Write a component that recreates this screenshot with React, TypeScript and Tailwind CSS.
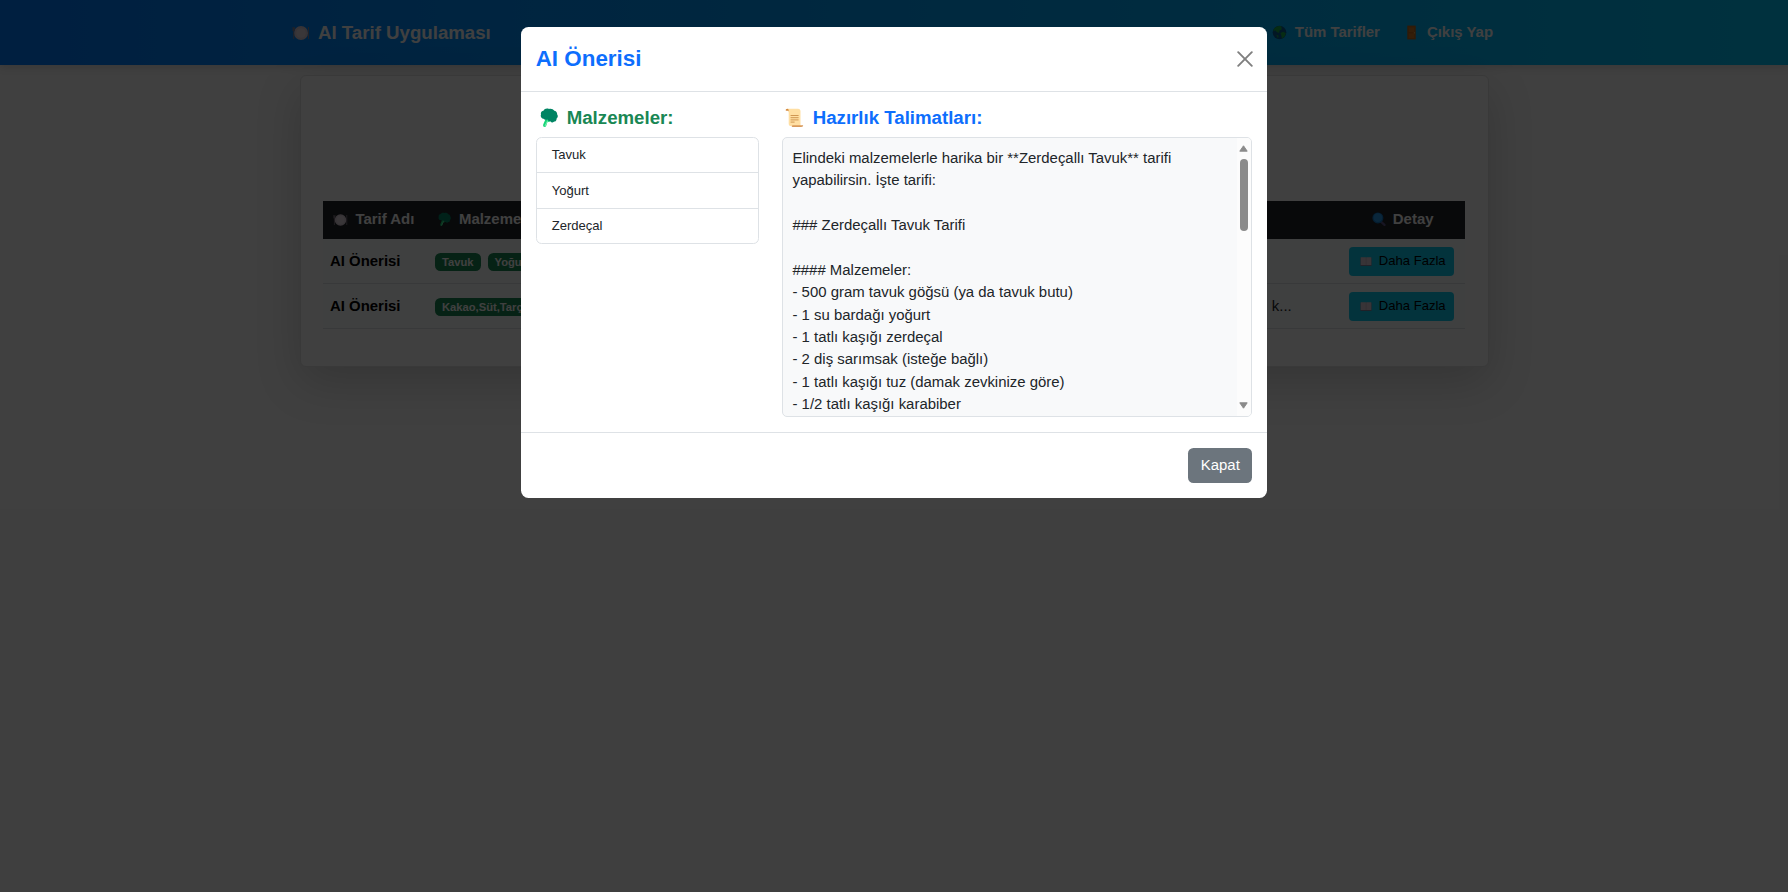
import type { ReactNode } from "react";

const PlateIcon = ({ className }: { className: string }) => (
  <svg viewBox="0 0 18 16" className={className}>
    <circle cx="9" cy="8" r="7" fill="#d9ccd6" />
    <circle cx="9" cy="8" r="4.800" fill="#e6dbe4" />
    <path d="M1 2v4M2.4 2v4M1.7 3v11M16.500 2v12" stroke="#8f8290" strokeWidth=".9" fill="none" />
  </svg>
);

const BroccoliIcon = ({ className }: { className: string }) => (
  <svg viewBox="0 0 18 20" className={className}>
    <path d="M6 10 3.200 16.500q-.8 2 1.300 2.500 1.600.2 2-2l.8-2.800L11.500 13l-1-4z" fill="#16d577" />
    <path d="M7.800 12.500 4.900 18.200" stroke="#8df2bb" strokeWidth=".9" />
    <path d="M9 .9C6.800-.1 4.200.8 3.700 2.500 1.700 2.900.4 4.600 1 6.500c-.9 2 .5 4.100 2.500 4.300 1 1.200 2.700 1.300 4 .4.5 1.700 1.900 2.300 3 2 .8 1.500 2.800 1.600 3.800.4 1.600-.1 2.500-1.500 2.200-2.900 1.500-1.200 1.700-3.200.6-4.500.2-2-1.200-3.300-2.800-3.500C13.300 1 11 .2 9 .9z" fill="#008463" />
  </svg>
);

const ScrollIcon = ({ className }: { className: string }) => (
  <svg viewBox="0 0 19 20" className={className}>
    <path d="M2 .8h11q2.500 0 2.500 2.500V18H5.500q-1.800 0-1.800-2V4.500z" fill="#ffdfa3" />
    <path d="M.6 2.300Q.6.700 2.200.700 3.800.700 3.800 2.800H1.300z" fill="#d3883e" />
    <path d="M5.600 7.500h8M5.600 9.700h8M5.600 11.900h8M5.600 14.100h4" stroke="#cb8f4a" strokeWidth=".9" />
    <path d="M7.500 17.200h10.700q.2 1.800-2 1.800H7.500q-1.600-.2 0-1.800z" fill="#d99a5b" />
  </svg>
);

const GlobeIcon = ({ className }: { className: string }) => (
  <svg viewBox="0 0 16 16" className={className}>
    <circle cx="8" cy="8" r="7.300" fill="#0b5c94" />
    <path d="M2.500 3.500Q6 .300 9.800 1.200L10.500 4.500 8 5.800 7.500 8.500 5 7.500 3.500 5.500 1.200 7zM9 8.500l3-1.200 2.800 1.500-1.500 3.800-2.700 1.800-.5-3zM4.500 10.500l2.500 1-.6 2.500z" fill="#1bb14c" />
  </svg>
);

const DoorIcon = ({ className }: { className: string }) => (
  <svg viewBox="0 0 10 16" className={className}>
    <path d="M.3.300h9.400v15.400H.3z" fill="#c06a1c" />
    <path d="M2 2.500h6v5H2zM2 9h6v5H2z" fill="#cf7a24" />
    <circle cx="8.200" cy="8.300" r=".7" fill="#ffd060" />
  </svg>
);

const SearchIcon = ({ className }: { className: string }) => (
  <svg viewBox="0 0 15 16" className={className}>
    <path d="m9.800 10.500 3.600 3.300" stroke="#5b5488" strokeWidth="2.400" strokeLinecap="round" />
    <circle cx="6.300" cy="6.300" r="5.900" fill="#1378c4" />
    <circle cx="6.300" cy="6" r="4.600" fill="#2b9cec" />
  </svg>
);

const BookIcon = ({ className }: { className: string }) => (
  <svg viewBox="0 0 13 11" className={className}>
    <path d="M.5 1.500h12v8.800H.5z" fill="#8d8098" />
    <path d="M.8.800h5.600v8.600H.8zM6.700.800h5.500v8.600H6.700z" fill="#ddd0da" />
  </svg>
);

const Badge = ({ children }: { children: ReactNode }) => (
  <span className="flex h-[18.500px] items-center rounded-[5.500px] bg-[#198754] px-[7px] text-[11.200px] font-bold text-white">
    {children}
  </span>
);

const rows = [
  { name: "AI Önerisi", badges: ["Tavuk", "Yoğurt", "Zerdeçal"], note: "" },
  { name: "AI Önerisi", badges: ["Kakao,Süt,Tarçın"], note: "k..." },
];

const ingredients = ["Tavuk", "Yoğurt", "Zerdeçal"];

const instructions = `Elindeki malzemelerle harika bir **Zerdeçallı Tavuk** tarifi yapabilirsin. İşte tarifi:

### Zerdeçallı Tavuk Tarifi

#### Malzemeler:
- 500 gram tavuk göğsü (ya da tavuk butu)
- 1 su bardağı yoğurt
- 1 tatlı kaşığı zerdeçal
- 2 diş sarımsak (isteğe bağlı)
- 1 tatlı kaşığı tuz (damak zevkinize göre)
- 1/2 tatlı kaşığı karabiber`;

function Navbar() {
  return (
    <nav className="flex h-[65px] items-center justify-between bg-linear-to-r from-[#007bff] to-[#00c3f5] pl-[292px] pr-[295px] font-bold text-white shadow-[0_2px_8px_rgba(0,0,0,0.15)]">
      <div className="flex items-center text-[18.670px]">
        <PlateIcon className="mr-2 h-4 w-[18px]" />
        AI Tarif Uygulaması
      </div>
      <div className="flex items-center text-[14.930px]">
        <GlobeIcon className="mr-2 size-[15px]" />
        Tüm Tarifler
        <DoorIcon className="ml-[27.500px] mr-[10.500px] h-[15px] w-[9px]" />
        Çıkış Yap
      </div>
    </nav>
  );
}

function RecipeCard() {
  return (
    <main className="mx-[299.500px] mt-[10px] h-[292px] rounded-md border border-[#e3e3e3] bg-white px-[22.500px] pt-[125px] shadow-[0_15px_45px_rgba(0,0,0,0.175)]">
      <div className="flex h-[38px] items-center bg-[#212529] pb-px font-bold text-white">
        <div className="flex w-[112px] items-center pl-[10px]">
          <PlateIcon className="mr-[7.500px] h-[14px] w-[15px]" />
          Tarif Adı
        </div>
        <div className="flex flex-1 items-center pl-[3px]">
          <BroccoliIcon className="mr-[8px] h-[15px] w-[13px]" />
          Malzemeler
        </div>
        <div className="mr-[31.500px] flex items-center">
          <SearchIcon className="mr-[7px] h-[15px] w-[14px]" />
          Detay
        </div>
      </div>
      {rows.map((row, i) => (
        <div key={i} className="flex h-[45px] items-center border-b border-[#dee2e6] bg-[#fbfdfd]">
          <div className="w-[112px] pl-[7px] font-bold text-black">{row.name}</div>
          <div className="flex flex-1 gap-[7px] pt-[2px]">
            {row.badges.map((b) => (
              <Badge key={b}>{b}</Badge>
            ))}
          </div>
          <div className="w-[77px]">{row.note}</div>
          <div className="mr-[11.200px] flex h-[29px] w-[105px] items-center rounded bg-[#0dcaf0] pl-[11px] text-[13.070px] text-black">
            <BookIcon className="mr-[7px] h-[11px] w-[12px]" />
            Daha Fazla
          </div>
        </div>
      ))}
    </main>
  );
}

function InstructionsBox() {
  return (
    <div className="flex h-[280px] w-[470.500px] overflow-hidden rounded-[5px] border border-[#dee2e6] bg-[#f8f9fa]">
      <p className="flex-1 whitespace-pre-wrap pl-[9.800px] pr-[9px] pt-[9.300px] leading-[22.400px]">{instructions}</p>
      <div className="flex w-[14.500px] flex-col items-center justify-between bg-[#fcfcfc] pb-[7px] pt-[7px]">
        <div className="flex flex-col items-center gap-[7px]">
          <svg viewBox="0 0 9 7" className="h-[7px] w-[9px]">
            <path d="M4.500.800 8.200 6.200H.8z" fill="#8b8b8b" stroke="#8b8b8b" strokeLinejoin="round" />
          </svg>
          <div className="h-[72px] w-2 rounded-full bg-[#8b8b8b]" />
        </div>
        <svg viewBox="0 0 9 7" className="h-[7px] w-[9px]">
          <path d="M4.500 6.200 8.200.800H.8z" fill="#8b8b8b" stroke="#8b8b8b" strokeLinejoin="round" />
        </svg>
      </div>
    </div>
  );
}

function RecipeDialog() {
  return (
    <div role="dialog" className="h-[471px] w-[746.600px] rounded-[7.500px] bg-white text-[#212529]">
      <header className="flex h-[64.500px] items-center justify-between border-b border-[#dee2e6] pl-[15px] pr-[14.500px]">
        <h2 className="text-[22.400px] font-bold text-[#0d6efd]">AI Önerisi</h2>
        <svg viewBox="0 0 16 16" className="size-4">
          <path d="m1.200 1.200 13.600 13.600M14.800 1.200 1.200 14.800" stroke="#7f7f7f" strokeWidth="1.900" strokeLinecap="round" />
        </svg>
      </header>
      <div className="flex h-[341px] gap-[23px] border-b border-[#dee2e6] px-[15px] pt-[14px]">
        <section className="w-[223px]">
          <h3 className="flex h-[31px] items-start pl-[4px] text-[18.670px] font-bold leading-[23px] text-[#198754]">
            <BroccoliIcon className="mr-[9px] mt-[2px] h-[20px] w-[18px]" />
            Malzemeler:
          </h3>
          <ul className="divide-y divide-[#dee2e6] rounded-[5.500px] border border-[#dee2e6] text-[13.070px]">
            {ingredients.map((item) => (
              <li key={item} className="flex h-[35.600px] items-center pl-[15px] last:h-[34.600px]">
                {item}
              </li>
            ))}
          </ul>
        </section>
        <section>
          <h3 className="flex h-[31px] items-start pl-[3px] text-[18.670px] font-bold leading-[23px] text-[#0d6efd]">
            <ScrollIcon className="mr-[9px] mt-[2px] h-[20px] w-[19px]" />
            Hazırlık Talimatları:
          </h3>
          <InstructionsBox />
        </section>
      </div>
      <footer className="flex h-[66px] items-center justify-end px-[15px]">
        <button className="h-[35.500px] w-[64px] rounded-[5.500px] bg-[#6c757d] text-white">Kapat</button>
      </footer>
    </div>
  );
}

export default function App() {
  return (
    <div className="relative h-screen overflow-hidden bg-[#fdfdfd] font-['Liberation_Sans',Arial,sans-serif] text-[14.930px] text-[#212529]">
      <Navbar />
      <RecipeCard />
      <div className="absolute inset-0 flex items-start justify-center bg-black/75 pt-[27px]">
        <RecipeDialog />
      </div>
    </div>
  );
}
